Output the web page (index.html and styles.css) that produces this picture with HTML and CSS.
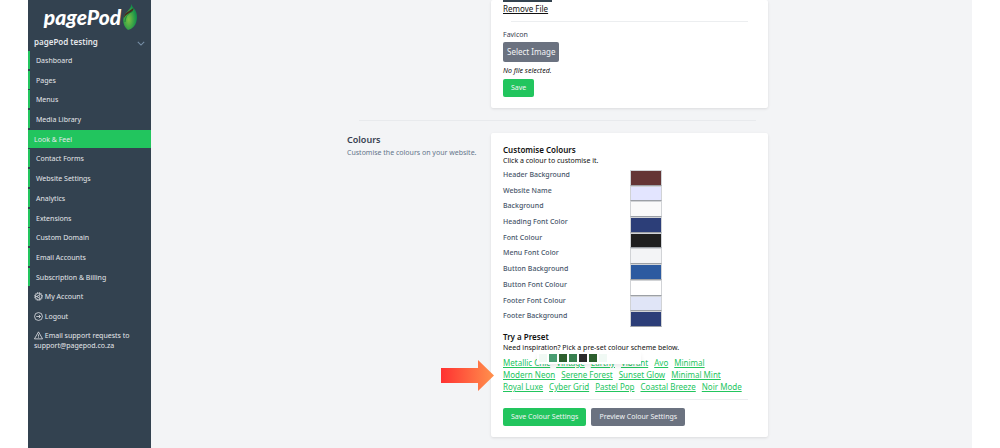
FILE: index.html
```html
<!DOCTYPE html>
<html lang="en">
<head>
    <meta charset="UTF-8">
    <meta name="viewport" content="width=device-width, initial-scale=1.0">
    <title>Look &amp; Feel - pagePod</title>
    <link rel="stylesheet" href="styles.css">
</head>
<body>

    <div class="app">
        <aside class="sidebar">
            <a class="logo" href="#">
                <span class="logo-text">pagePod</span>
                <svg class="logo-leaf" viewBox="0 0 14 26" aria-hidden="true">
                    <defs>
                        <radialGradient id="leaf" cx="0.4" cy="0.6" r="0.55">
                            <stop offset="0" stop-color="#7cc242"/>
                            <stop offset="1" stop-color="#14904a"/>
                        </radialGradient>
                    </defs>
                    <path d="M8.500 0C9 2 9.500 3 11 4.500C14 8 14.500 13 13.500 17C12.500 22 9 25 5 26C1 23 -0.500 18 0.500 14C1.500 8.500 8 6 8.500 0Z" fill="url(#leaf)"/>
                    <path d="M0.800 14C1.500 8 7 7 10.500 4C10.500 9 4 8.500 0.800 14Z" fill="#4a2a1c"/>
                    <path d="M9.500 7.500C5 9.500 2.500 12 2 18" fill="none" stroke="#0f7a3c" stroke-width="0.800"/>
                </svg>
            </a>

            <button class="site-switch" type="button">
                <span>pagePod testing</span>
                <svg class="chevron" viewBox="0 0 10 6" aria-hidden="true">
                    <path d="M1 1L5 5L9 1" fill="none" stroke="#7890a8" stroke-width="1.300"/>
                </svg>
            </button>

            <nav class="menu">
                <a class="menu-item" href="#">Dashboard</a>
                <a class="menu-item" href="#">Pages</a>
                <a class="menu-item" href="#">Menus</a>
                <a class="menu-item" href="#">Media Library</a>
                <a class="menu-item active" href="#">Look &amp; Feel</a>
                <a class="menu-item" href="#">Contact Forms</a>
                <a class="menu-item" href="#">Website Settings</a>
                <a class="menu-item" href="#">Analytics</a>
                <a class="menu-item" href="#">Extensions</a>
                <a class="menu-item" href="#">Custom Domain</a>
                <a class="menu-item" href="#">Email Accounts</a>
                <a class="menu-item" href="#">Subscription &amp; Billing</a>
                <a class="menu-item plain" href="#">
                    <svg class="icon" viewBox="0 0 16 16" aria-hidden="true">
                        <circle cx="8" cy="8" r="5.800"/>
                        <circle cx="8" cy="8" r="2"/>
                        <circle cx="8" cy="8" r="7.200" stroke-dasharray="1.800 1.970"/>
                        <path d="M2.200 8H6M9 6.300L10.900 3M9 9.700L10.900 13"/>
                    </svg>
                    My Account
                </a>
                <a class="menu-item plain" href="#">
                    <svg class="icon" viewBox="0 0 16 16" aria-hidden="true">
                        <circle cx="8" cy="8" r="7"/>
                        <path d="M4 8H11.500M8.500 5L11.500 8L8.500 11"/>
                    </svg>
                    Logout
                </a>
            </nav>

            <p class="support">
                <svg class="icon" viewBox="0 0 16 16" aria-hidden="true">
                    <path d="M8 1.500L15.200 14H0.800ZM8 6V10M8 11.200V12.400"/>
                </svg>
                Email support requests to support@pagepod.co.za
            </p>
        </aside>

        <main class="content">
            <section class="section">
                <form class="card branding">
                    <div class="thumb"></div>
                    <a class="remove" href="#">Remove File</a>
                    <hr class="rule">
                    <label class="field-label" for="favicon">Favicon</label>
                    <button class="btn btn-grey btn-large" id="favicon" type="button">Select Image</button>
                    <p class="no-file">No file selected.</p>
                    <button class="btn btn-green" type="submit">Save</button>
                </form>
            </section>

            <hr class="divider">

            <section class="section">
                <div class="intro">
                    <h2>Colours</h2>
                    <p>Customise the colours on your website.</p>
                </div>

                <form class="card">
                    <h3>Customise Colours</h3>
                    <p class="hint">Click a colour to customise it.</p>

                    <div class="colours">
                        <label for="c1">Header Background</label>
                        <input type="color" id="c1" value="#643535">
                        <label for="c2">Website Name</label>
                        <input type="color" id="c2" value="#e3e5ff">
                        <label for="c3">Background</label>
                        <input type="color" id="c3" value="#fafafa">
                        <label for="c4">Heading Font Color</label>
                        <input type="color" id="c4" value="#2c3e78">
                        <label for="c5">Font Colour</label>
                        <input type="color" id="c5" value="#1f1f1f">
                        <label for="c6">Menu Font Color</label>
                        <input type="color" id="c6" value="#f3f4f6">
                        <label for="c7">Button Background</label>
                        <input type="color" id="c7" value="#2c5aa0">
                        <label for="c8">Button Font Colour</label>
                        <input type="color" id="c8" value="#ffffff">
                        <label for="c9">Footer Font Colour</label>
                        <input type="color" id="c9" value="#e0e5f7">
                        <label for="c10">Footer Background</label>
                        <input type="color" id="c10" value="#2c3e78">
                    </div>

                    <h3>Try a Preset</h3>
                    <p class="hint">Need inspiration? Pick a pre-set colour scheme below.</p>

                    <div class="presets">
                        <a href="#">Metallic Chic</a>
                        <a href="#">Vintage</a>
                        <a href="#">Earthy</a>
                        <a href="#">Vibrant</a>
                        <a href="#">Avo</a>
                        <a href="#">Minimal</a>
                        <a href="#">Modern Neon</a>
                        <a href="#">Serene Forest</a>
                        <a href="#">Sunset Glow</a>
                        <a href="#">Minimal Mint</a>
                        <a href="#">Royal Luxe</a>
                        <a href="#">Cyber Grid</a>
                        <a href="#">Pastel Pop</a>
                        <a href="#">Coastal Breeze</a>
                        <a href="#">Noir Mode</a>

                        <!-- swatches of the hovered preset -->
                        <div class="tooltip">
                            <span class="sw mint"></span>
                            <span class="sw jade"></span>
                            <span class="sw forest"></span>
                            <span class="sw fern"></span>
                            <span class="sw coal"></span>
                            <span class="sw forest"></span>
                            <span class="sw mint"></span>
                        </div>

                        <svg class="arrow" viewBox="0 0 53 31" aria-hidden="true">
                            <defs>
                                <linearGradient id="arrowFill">
                                    <stop offset="0" stop-color="#ff3131"/>
                                    <stop offset="1" stop-color="#ff914d"/>
                                </linearGradient>
                            </defs>
                            <path d="M0 8H37V0L53 15.500L37 31V23H0Z" fill="url(#arrowFill)"/>
                        </svg>
                    </div>

                    <hr class="rule">

                    <div class="actions">
                        <button class="btn btn-green" type="submit">Save Colour Settings</button>
                        <button class="btn btn-grey" type="button">Preview Colour Settings</button>
                    </div>
                </form>
            </section>
        </main>
    </div>

</body>
</html>
```
FILE: styles.css
```css
* {
    box-sizing: border-box;
}

body {
    margin: 0;
    background-color: #fff;
    color: #111;
    font-family: "Noto Sans", sans-serif;
    font-size: 7px;
    line-height: 10px;
}

h2, h3, p {
    margin: 0;
}

button {
    border: none;
    font-family: inherit;
    cursor: pointer;
}

.app {
    display: flex;
    min-height: 100vh;
    margin: 0 28px;
    background-color: #f3f4f6;
}

/* Sidebar */
.sidebar {
    flex: 0 0 123px;
    background-color: #334250;
    color: #e5e7eb;
}

.logo {
    display: flex;
    justify-content: center;
    align-items: center;
    gap: 2px;
    height: 33px;
    padding-left: 2px;
    color: #fff;
    text-decoration: none;
}

.logo-text {
    font-family: Lato, sans-serif;
    font-size: 21px;
    font-style: italic;
    font-weight: 900;
    line-height: 28px;
}

.logo-leaf {
    width: 14px;
    height: 26px;
}

.site-switch {
    display: flex;
    justify-content: space-between;
    align-items: center;
    width: 100%;
    height: 18px;
    padding: 0 6px 2px;
    background: none;
    color: #e5e7eb;
    font-size: 8px;
    font-weight: 600;
}

.chevron {
    width: 8px;
    height: 5px;
    margin-top: 4px;
}

.menu {
    display: flex;
    flex-direction: column;
    justify-content: space-between;
    height: 274px;
}

.menu-item {
    padding: 5px 6px 3px;
    border-left: 2px solid #22c55e;
    color: #e5e7eb;
    text-decoration: none;
}

.menu-item.active {
    padding-left: 4px;
    background-color: #22c55e;
}

.menu-item.plain {
    padding-left: 4px;
    border-color: transparent;
}

.icon {
    width: 9px;
    height: 9px;
    vertical-align: -2px;
    fill: none;
    stroke: #e5e7eb;
    stroke-width: 1.4;
}

.support {
    padding: 6px;
}

/* Content */
.content {
    flex: 1;
    padding: 0 204px 0 196px;
}

.section {
    display: flex;
    justify-content: space-between;
}

.intro {
    padding-top: 2px;
    color: #64748b;
}

.intro h2 {
    margin-bottom: 3px;
    color: #374151;
    font-size: 9px;
    font-weight: 600;
}

.card {
    width: 277px;
    margin-left: auto;
    padding: 11px 12px;
    background-color: #fff;
    border-radius: 2px;
    box-shadow: 0 1px 3px rgba(0, 0, 0, 0.1);
}

.card.branding {
    padding-top: 0;
}

.card h3 {
    font-size: 8px;
    font-weight: 600;
    line-height: 12px;
}

.thumb {
    width: 49px;
    height: 2px;
    background-color: #34434f;
}

.remove {
    display: block;
    width: fit-content;
    color: #111;
    font-size: 8px;
    line-height: 13px;
}

.rule {
    margin: 6px 8px 8px;
    border: none;
    border-top: 1px solid #eceef0;
}

.divider {
    margin: 12px;
    border: none;
    border-top: 1px solid #e8eaed;
}

.field-label {
    display: block;
    margin-bottom: 2px;
    color: #374151;
}

.btn {
    padding: 4px 8px;
    border-radius: 2px;
    color: #f3f4f6;
    font-size: 7px;
    line-height: 10px;
}

.btn-green {
    background-color: #22c55e;
}

.btn-grey {
    background-color: #6b7280;
}

.btn-large {
    padding: 4px;
    font-size: 8px;
    line-height: 12px;
}

.no-file {
    margin: 4px 0 3px;
    font-style: italic;
}

.colours {
    display: grid;
    grid-template-columns: 1fr 1fr;
    grid-template-rows: repeat(10, 1fr);
    height: 157px;
    margin: 4px 0;
    color: #475569;
    font-weight: 500;
}

.colours input {
    width: 32px;
    height: 100%;
    padding: 0;
    border: 1px solid #d1d3d6;
    border-bottom-color: #9ca0a6;
    background: none;
}

.colours input::-webkit-color-swatch-wrapper {
    padding: 0;
}

.colours input::-webkit-color-swatch {
    border: none;
}

.presets {
    position: relative;
    display: flex;
    flex-wrap: wrap;
    column-gap: 6px;
    margin-top: 4px;
    font-size: 8px;
    line-height: 12px;
}

.presets a {
    color: #22c55e;
}

.tooltip {
    position: absolute;
    top: -5px;
    left: 34px;
    display: flex;
    gap: 2px;
    width: 104px;
    padding: 2px;
    background-color: #fff;
    box-shadow: 0 3px 4px rgba(0, 0, 0, 0.08);
}

.sw {
    width: 8px;
    height: 8px;
}

.mint {
    background-color: #f0f9f4;
}

.jade {
    background-color: #4a9d72;
}

.forest {
    background-color: #2d5f2e;
}

.fern {
    background-color: #38804f;
}

.coal {
    background-color: #2b2b2b;
}

.arrow {
    position: absolute;
    top: 3px;
    left: -62px;
    width: 53px;
    height: 31px;
}

.actions {
    display: flex;
    gap: 5px;
}
```
